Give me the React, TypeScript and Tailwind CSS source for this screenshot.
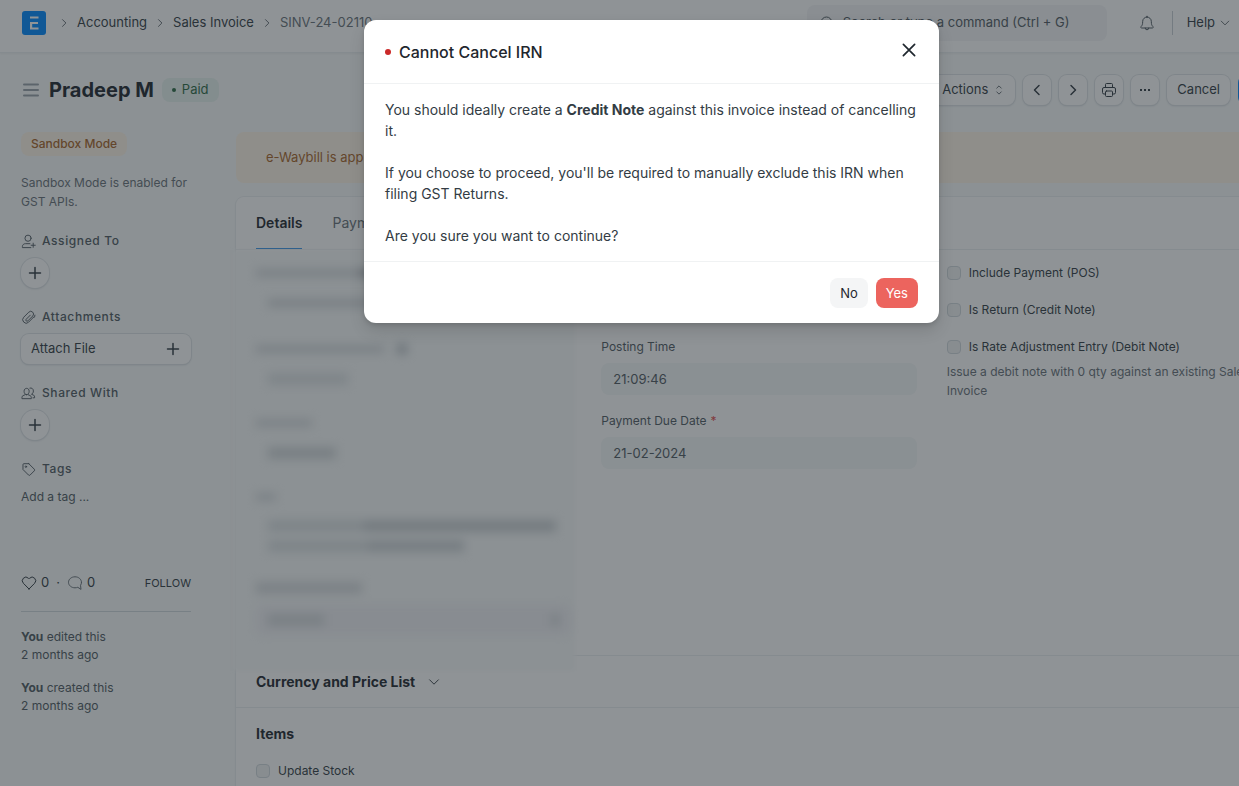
import type { ReactNode } from 'react';

const iconPaths = {
  chevronRight: <path d="M6 3.5 10.5 8 6 12.5" />,
  chevronLeft: <path d="M10 3.5 5.5 8l4.5 4.5" />,
  chevronDown: <path d="M3 5.5 8 10.5l5-5" />,
  search: (
    <>
      <circle cx="7.5" cy="7.5" r="5.5" />
      <path d="m11.5 11.5 3 3" />
    </>
  ),
  close: <path d="m3 3 10 10M13 3 3 13" />,
  plus: <path d="M8 2.5v11M2.5 8h11" />,
  menu: <path d="M1 2.5h14M1 8h14M1 13.5h14" />,
  select: <path d="M5 5.5 8 2.5l3 3M5 10.5l3 3 3-3" />,
  bell: (
    <path d="M8 1.2V2M8 2a4.3 4.3 0 0 0-4.3 4.3c0 3.2-.6 4.3-1.6 5.2-.7.6-.3 1.5.5 1.5h10.8c.8 0 1.2-.9.5-1.5-1-.9-1.6-2-1.6-5.2A4.3 4.3 0 0 0 8 2ZM6.2 13a1.8 1.8 0 0 0 3.6 0" />
  ),
  printer: (
    <>
      <path d="M4.5 5.5v-3a1 1 0 0 1 1-1h5a1 1 0 0 1 1 1v3M4.5 12H3a1.5 1.5 0 0 1-1.500-1.500V7A1.500 1.500 0 0 1 3 5.500h10A1.500 1.500 0 0 1 14.500 7v3.500A1.500 1.500 0 0 1 13 12h-1.500" />
      <rect x="4.5" y="9" width="7" height="5.500" rx="1" />
    </>
  ),
  assign: (
    <>
      <circle cx="7.500" cy="4.500" r="3.300" />
      <path d="M10.500 14.500H1.500v-1.200c0-1.800 1.600-3 3.300-3H9.500M13 9.800v4.400M10.800 12h4.400" />
    </>
  ),
  attachment: (
    <path d="m13.900 7.100-5.800 5.900a3.600 3.600 0 0 1-5.200-.1 3.700 3.700 0 0 1 0-5.200l5.400-5.400a2.900 2.900 0 0 1 4.200 4.100L7.300 11.600a1.200 1.200 0 0 1-1.800-1.700l4.400-4.400M14.900 5.500a3.500 3.500 0 0 1-1 2.600" />
  ),
  users: (
    <>
      <path d="M6 9.300c1.600 0 2.700-1.600 2.700-3.600S7.600 2.500 6 2.500 3.300 3.700 3.300 5.700 4.400 9.300 6 9.300ZM4.500 9.200 2.200 10.300a2 2 0 0 0-1.200 1.900v1.300h10v-1.300a2 2 0 0 0-1.200-1.900L7.500 9.200" />
      <path d="M9.500 2.200c1.900-.6 3.700.8 3.700 3.100 0 1.800-.8 3-2 3.500l1.800.8a2 2 0 0 1 1.500 2v1h-1.700" />
    </>
  ),
  tag: (
    <>
      <path d="m8.300 1.800 5.900 5.900a1.200 1.200 0 0 1 0 1.700l-4.500 4.500a1.200 1.200 0 0 1-1.700 0L2.100 8V2.800a1 1 0 0 1 1-1h5.200Z" />
      <circle cx="5.200" cy="5" r=".8" />
    </>
  ),
  heart: (
    <path d="M8 14 2.400 8.300a3.600 3.600 0 0 1 0-5.100 3.500 3.500 0 0 1 5 0l.6.6.6-.6a3.500 3.500 0 0 1 5 0 3.600 3.600 0 0 1 0 5.100L8 14Z" />
  ),
  comment: (
    <path d="M14.500 7.300c0-3.100-2.900-5.500-6.500-5.500S1.500 4.200 1.500 7.300s2.900 5.500 6.500 5.500c1 0 2-.2 2.800-.5l3.200 2.100-.5-4.100c.6-.8 1-1.900 1-3Z" />
  ),
};

function Icon({ name, className }: { name: keyof typeof iconPaths; className: string }) {
  return (
    <svg
      viewBox="0 0 16 16"
      fill="none"
      stroke="currentColor"
      strokeLinecap="round"
      strokeLinejoin="round"
      aria-hidden="true"
      className={`shrink-0 ${className}`}
    >
      {iconPaths[name]}
    </svg>
  );
}

function Navbar() {
  return (
    <header className="flex h-[53px] items-center border-b border-[#ebeef0] bg-white px-[22px] pb-[6px] text-[13px] shadow-xs">
      <a href="#home" aria-label="Home">
        <svg viewBox="0 0 24 24" className="size-6" aria-hidden="true">
          <rect width="24" height="24" rx="3" fill="#0089ff" />
          <path d="M8 5.500h8.500v2H8zM8 11h8v2H10.200v3.500H16.500v2H8z" fill="#fff" />
        </svg>
      </a>
      <nav className="flex items-center text-[#333c44]" aria-label="Breadcrumb">
        <Icon name="chevronRight" className="ml-3 mr-[7px] size-3" />
        <a href="#accounting">Accounting</a>
        <Icon name="chevronRight" className="mx-[7px] size-3" />
        <a href="#sales-invoice">Sales Invoice</a>
        <Icon name="chevronRight" className="mx-[7px] size-3" />
        <a href="#invoice" className="text-[#687178]">SINV-24-02110</a>
      </nav>
      <div className="ml-auto flex h-9 w-[300px] items-center gap-2 rounded-lg bg-[#f4f5f6] px-3 text-[#505a62]">
        <Icon name="search" className="size-4" />
        <input
          aria-label="Search"
          placeholder="Search or type a command (Ctrl + G)"
          className="w-full bg-transparent outline-none placeholder:text-[#505a62]"
        />
      </div>
      <button aria-label="Notifications" className="ml-8 text-[#505a62]">
        <Icon name="bell" className="size-4" />
      </button>
      <span className="ml-[17px] h-6 w-px bg-[#c8cfd5]" />
      <button className="ml-[14px] mr-[50px] flex items-center gap-1 text-[#333c44]">
        Help
        <Icon name="chevronDown" className="size-3" />
      </button>
    </header>
  );
}

const surface = 'flex h-[30px] items-center bg-white text-[#333c44] shadow-[0_0_0_1px_#dfe3e6,0_1px_2px_#c8cfd5]';
const toolButton = `${surface} justify-center rounded-lg`;

function PageHead() {
  return (
    <div className="flex h-[74px] items-center pr-[21px] pl-[23px] text-[13px]">
      <button aria-label="Toggle sidebar" className="text-[#98a1a9]">
        <Icon name="menu" className="size-4 stroke-2" />
      </button>
      <h1 className="ml-[10px] text-xl font-bold text-[#1f272e]">Pradeep M</h1>
      <span className="ml-2 flex h-6 items-center gap-[6px] rounded-lg bg-[#e6f2ee] px-[10px] text-[#2d6b45]">
        <span className="size-1 rounded-full bg-current" />
        Paid
      </span>
      <div className="ml-auto flex gap-2">
        <button className={`${toolButton} gap-[5px] px-[10px]`}>
          Actions
          <Icon name="select" className="size-3" />
        </button>
        <button aria-label="Previous" className={`${toolButton} w-7`}>
          <Icon name="chevronLeft" className="size-4 stroke-[1.5]" />
        </button>
        <button aria-label="Next" className={`${toolButton} w-7`}>
          <Icon name="chevronRight" className="size-4 stroke-[1.5]" />
        </button>
        <button aria-label="Print" className={`${toolButton} w-7`}>
          <Icon name="printer" className="size-4" />
        </button>
        <button aria-label="Menu" className={`${toolButton} w-7 gap-[2px]`}>
          <span className="size-[2px] bg-current" />
          <span className="size-[2px] bg-current" />
          <span className="size-[2px] bg-current" />
        </button>
        <button className={`${toolButton} px-[10px]`}>Cancel</button>
        <button aria-label="Amend" className="h-[30px] w-11 rounded-lg bg-[#0089ff]" />
      </div>
    </div>
  );
}

function SidebarTitle({ icon, children }: { icon: keyof typeof iconPaths; children: ReactNode }) {
  return (
    <h2 className="flex h-5 items-center gap-[6px] text-xs font-medium tracking-wider text-[#505a62]">
      <Icon name={icon} className="size-[15px]" />
      {children}
    </h2>
  );
}

function AddButton({ label }: { label: string }) {
  return (
    <button aria-label={label} className={`${surface} mt-[7px] mb-[19px] w-7 justify-center rounded-full`}>
      <Icon name="plus" className="size-4 stroke-[1.5]" />
    </button>
  );
}

function Sidebar() {
  return (
    <aside className="w-[170px] shrink-0 text-xs text-[#505a62]">
      <span className="flex h-6 w-fit items-center rounded-lg bg-[#fff5e6] px-[10px] text-xs font-medium text-[#a8652a]">
        Sandbox Mode
      </span>
      <p className="mt-[17px] mb-5 leading-[19px] text-[#687178]">Sandbox Mode is enabled for GST APIs.</p>

      <SidebarTitle icon="assign">Assigned To</SidebarTitle>
      <AddButton label="Assign" />
      <SidebarTitle icon="attachment">Attachments</SidebarTitle>
      <button className={`${surface} mt-[7px] mb-[19px] w-full rounded-lg px-[10px] text-[13px]`}>
        Attach File
        <Icon name="plus" className="ml-auto size-4 stroke-[1.5]" />
      </button>
      <SidebarTitle icon="users">Shared With</SidebarTitle>
      <AddButton label="Share" />
      <SidebarTitle icon="tag">Tags</SidebarTitle>
      <button className="mt-2 block h-5">Add a tag ...</button>

      <div className="mt-[66px] flex h-5 items-center text-[13px] text-[#333c44]">
        <button className="flex items-center gap-1">
          <Icon name="heart" className="size-4" />0
        </button>
        <span className="mx-[7px]">·</span>
        <button className="flex items-center gap-1">
          <Icon name="comment" className="size-4 text-[#687178]" />0
        </button>
        <button className="ml-auto text-[11px]">FOLLOW</button>
      </div>
      <hr className="mt-[18px] mb-4 border-[#d1d8dd]" />
      <p className="mb-[15px] leading-[18px]">
        <b>You</b> edited this
        <br />2 months ago
      </p>
      <p className="leading-[18px]">
        <b>You</b> created this
        <br />2 months ago
      </p>
    </aside>
  );
}

function Field({ id, label, value, required }: { id: string; label: string; value: string; required?: boolean }) {
  return (
    <div className="mb-[10px]">
      <label htmlFor={id} className="flex h-8 items-center gap-1 text-xs text-[#505a62]">
        {label}
        {required && <span className="text-[#e24c4c]">*</span>}
      </label>
      <input
        id={id}
        defaultValue={value}
        readOnly
        className="h-8 w-full rounded-lg bg-[#f5f8f8] px-3 text-[13px] text-[#505a62]"
      />
    </div>
  );
}

function Check({ id, label }: { id: string; label: string }) {
  return (
    <div className="flex h-[37px] items-center gap-2 text-xs text-[#333c44]">
      <input
        id={id}
        type="checkbox"
        className="size-[14px] appearance-none rounded-sm border border-[#d1d8dd] bg-[#f0f2f3]"
      />
      <label htmlFor={id}>{label}</label>
    </div>
  );
}

// Customer fields are masked, only soft smudges of them stay visible
function MaskedColumn() {
  return (
    <div className="relative" aria-hidden="true">
      <div className="absolute -top-1 -bottom-4 -left-[22px] -right-1 bg-[#f8fafa] blur-[2px]" />
      <div className="relative flex flex-col items-start blur-[5px]">
        <span className="mt-[15px] flex w-[116px] justify-between bg-[#d6dadd]">
          <span className="h-2 w-24" />
          <span className="h-2 w-3 bg-[#aab0b5]" />
        </span>
        <span className="mt-[22px] ml-3 h-2 w-[110px] bg-[#d3d7da]" />
        <span className="mt-9 flex items-center gap-3">
          <span className="h-2 w-32 bg-[#d6dadd]" />
          <span className="size-3 rounded-full bg-[#c0c6cb]" />
        </span>
        <span className="mt-[18px] ml-3 h-3 w-20 bg-[#dfe3e5]" />
        <span className="mt-[34px] h-2 w-14 bg-[#d8dcdf]" />
        <span className="mt-[20px] ml-3 h-3 w-[68px] bg-[#d3d8da]" />
        <span className="mt-[34px] h-2 w-5 bg-[#d8dcdf]" />
        <span className="mt-[19px] ml-3 flex h-3 w-72 justify-end bg-[#dce1e3]">
          <span className="h-3 w-48 bg-[#cbd0d3]" />
        </span>
        <span className="mt-2 ml-3 flex h-3 w-[196px] justify-end bg-[#dce1e3]">
          <span className="h-3 w-24 bg-[#cfd4d7]" />
        </span>
        <span className="mt-[30px] h-3 w-[106px] bg-[#d9dcdf]" />
        <span className="mt-[11px] flex h-[30px] w-full items-center justify-between rounded-lg bg-[#f0f0f4] px-3">
          <span className="h-3 w-14 bg-[#d6dadd]" />
          <span className="h-3 w-2 bg-[#d6dadd]" />
        </span>
      </div>
    </div>
  );
}

function InvoiceForm() {
  return (
    <main className="min-w-0 flex-1">
      <div className="flex h-[51px] items-center rounded-lg bg-[#fff5e6] px-[30px] text-[13px] text-[#a8652a]">
        e-Waybill is applicable for this invoice and can be generated or updated.
      </div>
      <div className="mt-[14px] h-[700px] rounded-lg bg-white shadow-[0_0_0_1px_#ebeef0,0_1px_2px_#dfe3e6]">
        <div className="flex h-[53px] gap-[30px] border-b border-[#ebeef0] px-5 text-sm" role="tablist">
          <button role="tab" aria-selected="true" className="border-b border-[#0078e6] font-semibold text-[#1f272e]">
            Details
          </button>
          <button role="tab" aria-selected="false" className="text-[#687178]">
            Payments
          </button>
        </div>
        <section className="grid h-[406px] grid-cols-3 gap-[30px] border-b border-[#ebeef0] px-5 pt-1">
          <MaskedColumn />
          <div className="pt-[3px]">
            <Field id="date" label="Date" value="22-01-2024" />
            <Field id="posting-time" label="Posting Time" value="21:09:46" />
            <Field id="due-date" label="Payment Due Date" value="21-02-2024" required />
          </div>
          <div>
            <Check id="pos" label="Include Payment (POS)" />
            <Check id="return" label="Is Return (Credit Note)" />
            <Check id="debit" label="Is Rate Adjustment Entry (Debit Note)" />
            <p className="-mt-[3px] text-xs leading-[19px] text-[#687178]">
              Issue a debit note with 0 qty against an existing Sales Invoice
            </p>
          </div>
        </section>
        <section className="flex h-[52px] items-center gap-3 border-b border-[#ebeef0] px-5 text-[#1f272e]">
          <h2 className="text-sm font-bold">Currency and Price List</h2>
          <Icon name="chevronDown" className="size-[14px]" />
        </section>
        <section className="px-5 pt-4">
          <h2 className="mb-2 text-sm font-bold text-[#1f272e]">Items</h2>
          <Check id="stock" label="Update Stock" />
        </section>
      </div>
    </main>
  );
}

function CancelDialog() {
  return (
    <div className="absolute inset-0 flex items-start justify-center bg-[#1f272e]/50 pt-5">
      <div
        role="dialog"
        aria-modal="true"
        aria-labelledby="dialog-title"
        className="w-[575px] rounded-xl bg-white text-sm text-[#333c44] shadow-[0_8px_16px_rgba(0,0,0,0.12),0_2px_4px_rgba(0,0,0,0.12)]"
      >
        <div className="flex h-16 items-center border-b border-[#f0f2f3] px-[21px]">
          <span className="mr-2 size-[6px] rounded-full bg-[#cb2929]" />
          <h2 id="dialog-title" className="text-base font-medium text-[#1f272e]">
            Cannot Cancel IRN
          </h2>
          <button aria-label="Close" className="mb-1 ml-auto text-[#1f272e]">
            <Icon name="close" className="size-[18px] stroke-[1.5]" />
          </button>
        </div>
        <div className="px-[21px] py-[15px] leading-[21px]">
          <p>
            You should ideally create a <b>Credit Note</b> against this invoice instead of cancelling it.
          </p>
          <p className="my-[21px]">
            If you choose to proceed, you'll be required to manually exclude this IRN when filing GST Returns.
          </p>
          <p>Are you sure you want to continue?</p>
        </div>
        <div className="flex justify-end gap-2 border-t border-[#f0f2f3] px-[21px] pt-4 pb-[15px] text-[13px]">
          <button className="h-[30px] rounded-lg bg-[#f4f5f6] px-[10px] text-[#1f272e]">No</button>
          <button className="h-[30px] rounded-lg bg-[#ec645e] px-[10px] text-white">Yes</button>
        </div>
      </div>
    </div>
  );
}

export default function App() {
  return (
    <div className="h-screen overflow-hidden font-['Inter',sans-serif]">
      <div className="relative h-full min-w-[1303px] overflow-hidden bg-[#f8fafa]">
        <Navbar />
        <PageHead />
        <div className="flex gap-[45px] px-[21px] pt-[5px]">
          <Sidebar />
          <InvoiceForm />
        </div>
        <CancelDialog />
      </div>
    </div>
  );
}
